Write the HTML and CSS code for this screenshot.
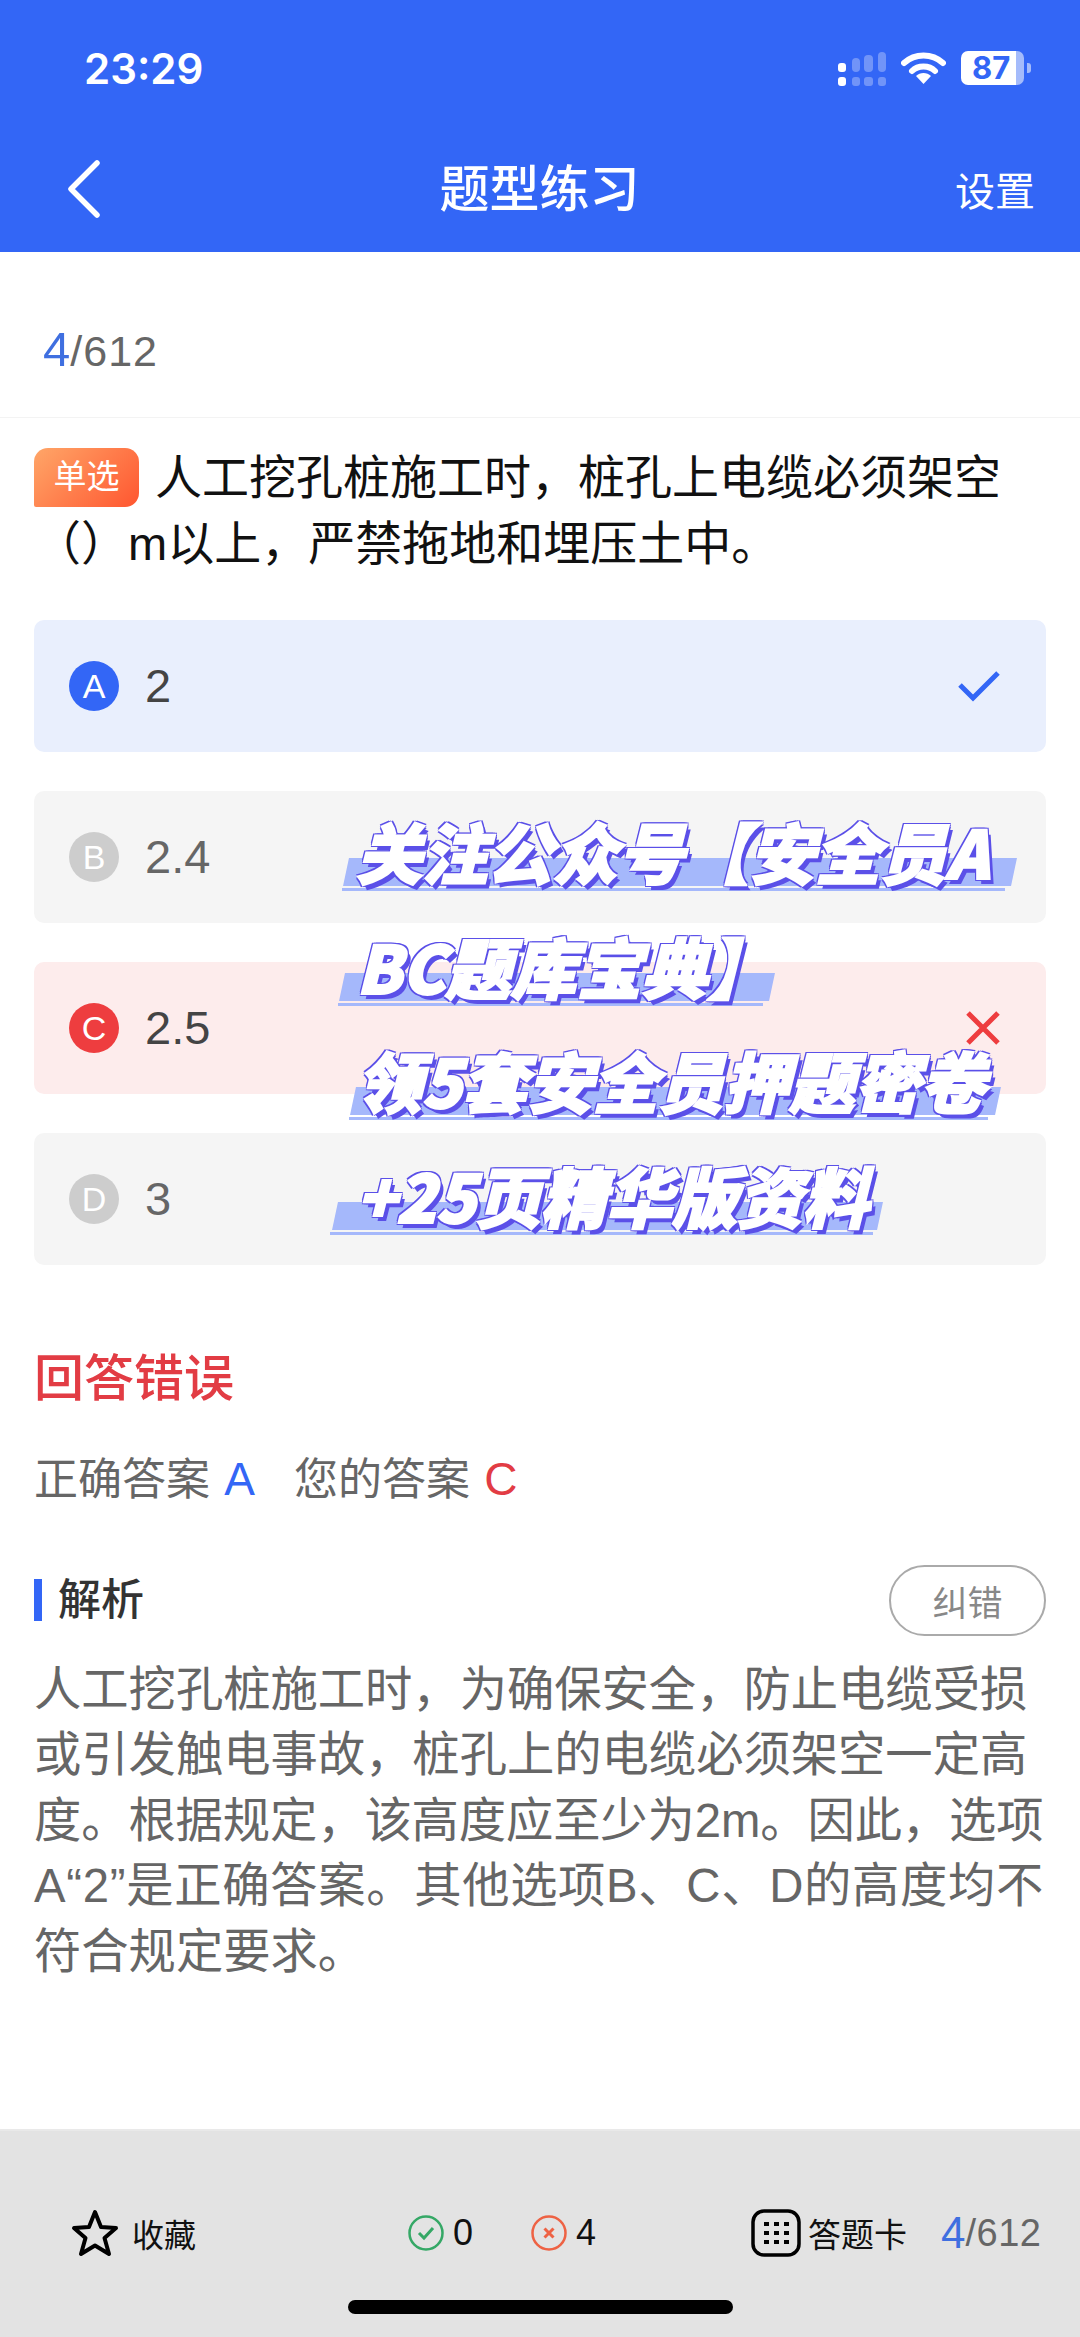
FILE: index.html
```html
<!DOCTYPE html>
<html lang="zh-CN">
<head>
    <meta charset="UTF-8">
    <meta name="viewport" content="width=device-width, initial-scale=1.0">
    <title>题型练习</title>
    <link rel="stylesheet" href="styles.css">
</head>
<body>
    <div class="page">
        <header class="top">
            <div class="status-bar">
                <span class="time">23:29</span>
                <div class="status-icons">
                    <svg class="signal" width="48" height="34" viewBox="0 0 48 34">
                        <g fill="#fff" opacity="0.3">
                            <rect x="14" y="6" width="8" height="14" rx="4"/>
                            <rect x="26" y="3" width="9" height="17" rx="4"/>
                            <rect x="40" y="0" width="8" height="20" rx="4"/>
                            <rect x="14" y="25" width="8" height="9" rx="3"/>
                            <rect x="26" y="25" width="9" height="9" rx="3"/>
                            <rect x="40" y="25" width="8" height="9" rx="3"/>
                        </g>
                        <rect x="0" y="11" width="8" height="9" rx="3" fill="#fff"/>
                        <rect x="0" y="25" width="8" height="9" rx="3" fill="#fff"/>
                    </svg>
                    <svg class="wifi" width="45" height="32" viewBox="0 0 45 32">
                        <path d="M3 11 C14 1 31 1 42 11" fill="none" stroke="#fff" stroke-width="6" stroke-linecap="round"/>
                        <path d="M11 19 C17 13 28 13 34 19" fill="none" stroke="#fff" stroke-width="6" stroke-linecap="round"/>
                        <path d="M15 24 C19 20 26 20 30 24 L22.500 32 Z" fill="#fff"/>
                    </svg>
                    <div class="battery">
                        <div class="battery-body"><span>87</span></div>
                        <div class="battery-nub"></div>
                    </div>
                </div>
            </div>
            <div class="nav-bar">
                <svg class="back" width="36" height="58" viewBox="0 0 36 58">
                    <path d="M31 3 L5 29 L31 55" fill="none" stroke="#fff" stroke-width="5.500" stroke-linecap="round" stroke-linejoin="round"/>
                </svg>
                <h1 class="nav-title">题型练习</h1>
                <span class="nav-action">设置</span>
            </div>
        </header>

        <div class="counter-row">
            <span class="count-now">4</span><span class="count-total">/612</span>
        </div>

        <main class="content">
            <p class="question"><span class="tag">单选</span>人工挖孔桩施工时，桩孔上电缆必须架空（）m以上，严禁拖地和埋压土中。</p>

            <div class="options">
                <div class="option option-right">
                    <span class="letter">A</span>
                    <span class="option-text">2</span>
                    <svg class="mark" width="44" height="32" viewBox="0 0 44 32">
                        <path d="M3 15 L16 28 L41 3" fill="none" stroke="#3366f6" stroke-width="5"/>
                    </svg>
                </div>
                <div class="option">
                    <span class="letter">B</span>
                    <span class="option-text">2.4</span>
                </div>
                <div class="option option-wrong">
                    <span class="letter">C</span>
                    <span class="option-text">2.5</span>
                    <svg class="mark" width="36" height="36" viewBox="0 0 36 36">
                        <path d="M3 3 L33 33 M33 3 L3 33" fill="none" stroke="#ee3d3f" stroke-width="5"/>
                    </svg>
                </div>
                <div class="option">
                    <span class="letter">D</span>
                    <span class="option-text">3</span>
                </div>
            </div>

            <h2 class="result">回答错误</h2>
            <p class="answers">正确答案 <span class="right-letter">A</span><span class="your-answer">您的答案 <span class="wrong-letter">C</span></span></p>

            <div class="analysis-head">
                <h3 class="analysis-title">解析</h3>
                <button class="report">纠错</button>
            </div>
            <p class="analysis">人工挖孔桩施工时，为确保安全，防止电缆受损或引发触电事故，桩孔上的电缆必须架空一定高<span class="fit-a">度。根据规定，该高度应至少为2m。因此，选项</span><span class="fit-b">A“2”是正确答案。其他选项B、C、D的高度均不</span>符合规定要求。</p>
        </main>

        <footer class="bottom">
            <div class="bottom-row">
                <div class="fav">
                    <svg width="48" height="48" viewBox="0 0 48 48">
                        <path d="M24 3 L30 18 L45 19 L33.500 29 L38 45 L24 36.500 L10 45 L14.500 29 L3 19 L18 18 Z" fill="none" stroke="#000" stroke-width="4" stroke-linejoin="round"/>
                    </svg>
                    <span>收藏</span>
                </div>
                <div class="stats">
                    <div class="stat">
                        <svg width="36" height="36" viewBox="0 0 36 36">
                            <circle cx="18" cy="18" r="16.500" fill="none" stroke="#35a866" stroke-width="2.500"/>
                            <path d="M11 18 L16 23 L25 13" fill="none" stroke="#35a866" stroke-width="3"/>
                        </svg>
                        <span>0</span>
                    </div>
                    <div class="stat">
                        <svg width="36" height="36" viewBox="0 0 36 36">
                            <circle cx="18" cy="18" r="16.500" fill="none" stroke="#ee6244" stroke-width="2.500"/>
                            <path d="M13.500 13.500 L22.500 22.500 M22.500 13.500 L13.500 22.500" fill="none" stroke="#ee6244" stroke-width="3"/>
                        </svg>
                        <span>4</span>
                    </div>
                </div>
                <div class="card-link">
                    <svg width="50" height="48" viewBox="0 0 50 48">
                        <rect x="2" y="2" width="46" height="44" rx="11" fill="none" stroke="#000" stroke-width="3.500"/>
                        <g fill="#000">
                            <rect x="13" y="13" width="5" height="4"/><rect x="23" y="13" width="5" height="4"/><rect x="33" y="13" width="5" height="4"/>
                            <rect x="13" y="22" width="5" height="4"/><rect x="23" y="22" width="5" height="4"/><rect x="33" y="22" width="5" height="4"/>
                            <rect x="13" y="31" width="5" height="4"/><rect x="23" y="31" width="5" height="4"/><rect x="33" y="31" width="5" height="4"/>
                        </g>
                    </svg>
                    <span class="card-text">答题卡</span>
                    <span class="bottom-now">4</span><span class="bottom-total">/612</span>
                </div>
            </div>
            <div class="home-indicator"></div>
        </footer>

        <div class="watermark">
            <span class="wm-line wm-first">关注公众号【安全员A</span>
            <span class="wm-line wm-second">BC题库宝典】</span>
            <span class="wm-line wm-third">领5套安全员押题密卷</span>
            <span class="wm-line wm-fourth">+25页精华版资料</span>
        </div>
    </div>
</body>
</html>
```

FILE: styles.css
```css
* {
    box-sizing: border-box;
}

body {
    margin: 0;
    background-color: #fff;
    font-family: "Liberation Sans", "Noto Sans CJK SC", sans-serif;
}

.page {
    position: relative;
    width: 1080px;
    height: 2337px;
    overflow: hidden;
    display: flex;
    flex-direction: column;
}

/* top blue bar */
.top {
    height: 252px;
    background-color: #3366f6;
    color: #fff;
}

.status-bar {
    height: 136px;
    padding: 46px 49px 0 84px;
    display: flex;
    justify-content: space-between;
    align-items: flex-start;
}

.time {
    font-family: Inter, sans-serif;
    font-size: 42px;
    font-weight: 600;
    line-height: 46px;
}

.status-icons {
    display: flex;
    align-items: flex-start;
    padding-top: 6px;
}

.signal {
    margin-right: 15px;
}

.wifi {
    margin-right: 15px;
}

.battery {
    display: flex;
    align-items: center;
    margin-top: -1px;
}

.battery-body {
    width: 63px;
    height: 34px;
    border-radius: 7px;
    background: linear-gradient(to right, #fff 87%, #a4bbfb 87%);
    padding-left: 11px;
}

.battery-body span {
    font-family: Inter, sans-serif;
    font-size: 31px;
    font-weight: 700;
    line-height: 34px;
    color: #3366f6;
    display: block;
}

.battery-nub {
    width: 4px;
    height: 10px;
    margin-left: 3px;
    border-radius: 0 3px 3px 0;
    background-color: #a4bbfb;
}

.nav-bar {
    height: 116px;
    padding: 0 45px 0 66px;
    display: flex;
    justify-content: space-between;
    align-items: center;
}

.back {
    margin-top: -11px;
}

.nav-title {
    margin: -8px 0 0 22px;
    font-size: 50px;
    font-weight: 500;
    line-height: 60px;
}

.nav-action {
    font-size: 40px;
    line-height: 48px;
    margin-top: -4px;
}

/* 4/612 row */
.counter-row {
    height: 166px;
    padding: 67px 0 0 43px;
    border-bottom: 1px solid #f3f3f3;
    line-height: 60px;
}

.count-now {
    font-size: 49px;
    color: #3f6fe0;
}

.count-total {
    font-size: 43px;
    letter-spacing: 1px;
    color: #666;
}

/* question and answers */
.content {
    flex: 1;
    padding: 0 34px;
}

.question {
    margin: 27px 0 0;
    font-size: 47px;
    line-height: 66px;
    color: #111;
}

.tag {
    display: inline-block;
    width: 105px;
    height: 59px;
    margin-right: 16px;
    border-radius: 14px 14px 14px 2px;
    background: linear-gradient(135deg, #ffa668, #ff5630);
    color: #fff;
    font-size: 33px;
    line-height: 57px;
    text-align: center;
    vertical-align: 6px;
}

.options {
    margin-top: 43px;
    display: flex;
    flex-direction: column;
    gap: 39.500px;
}

.option {
    height: 131.500px;
    padding: 0 45px 0 35px;
    border-radius: 10px;
    background-color: #f5f5f5;
    display: flex;
    align-items: center;
    color: #666;
}

.letter {
    width: 50px;
    height: 50px;
    border-radius: 50%;
    background-color: #cdcdcd;
    color: #fff;
    font-size: 34px;
    line-height: 50px;
    text-align: center;
}

.option-text {
    flex: 1;
    margin-left: 26px;
    font-size: 47px;
    line-height: 56px;
}

.option-right {
    background-color: #e9effd;
    color: #444;
}

.option-right .letter {
    background-color: #3366f6;
}

.option-wrong {
    background-color: #fdecec;
    color: #444;
}

.option-wrong .letter {
    background-color: #ee3d3f;
}

.result {
    margin: 82px 0 0;
    font-size: 50px;
    font-weight: 500;
    line-height: 64px;
    color: #e23c44;
}

.answers {
    margin: 38px 0 0;
    font-size: 44px;
    line-height: 60px;
    color: #666;
}

.right-letter {
    margin-left: 2px;
    font-size: 46px;
    color: #3366f6;
}

.wrong-letter {
    margin-left: 2px;
    font-size: 46px;
    color: #e23c44;
}

.your-answer {
    margin-left: 39px;
}

.analysis-head {
    margin-top: 55px;
    display: flex;
    justify-content: space-between;
    align-items: center;
    height: 71px;
}

.analysis-title {
    margin: 0;
    padding-left: 16px;
    border-left: 8px solid #3366f6;
    font-size: 43px;
    font-weight: 500;
    line-height: 42px;
    color: #333;
}

.report {
    width: 157px;
    height: 71px;
    padding: 0;
    border: 2px solid #aaa;
    border-radius: 36px;
    background: none;
    color: #888;
    font-family: inherit;
    font-size: 35px;
}

.analysis {
    margin: 21px 0 0;
    font-size: 47.300px;
    line-height: 65.500px;
    color: #666;
}

/* line 3 and 4 run to the full width in the screenshot */
.fit-a {
    letter-spacing: -0.100px;
}

.fit-b {
    letter-spacing: 0.700px;
}

/* bottom bar */
.bottom {
    height: 208px;
    padding-top: 72px;
    background-color: #e3e3e3;
    border-top: 2px solid #e9e9e9;
    color: #111;
}

.bottom-row {
    height: 60px;
    padding-left: 71px;
    display: flex;
    align-items: center;
}

.bottom-row svg {
    flex-shrink: 0;
}

.fav {
    width: 337px;
    display: flex;
    align-items: center;
    gap: 13px;
    font-size: 32px;
}

.stats {
    width: 343px;
    display: flex;
    align-items: center;
    gap: 58px;
    font-size: 36px;
}

.stat {
    display: flex;
    align-items: center;
    gap: 9px;
}

.card-link {
    display: flex;
    align-items: center;
}

.card-text {
    margin-left: 7px;
    font-size: 33px;
}

.bottom-now {
    margin-left: 34px;
    font-size: 44px;
    color: #3f6fe0;
}

.bottom-total {
    font-size: 38px;
    letter-spacing: 0.500px;
    color: #666;
}

.home-indicator {
    width: 385px;
    height: 14px;
    margin: 37px auto 0;
    border-radius: 7px;
    background-color: #000;
}

/* promo text over the page */
.watermark {
    position: absolute;
    z-index: 1;
    left: 356px;
    top: 793px;
    display: flex;
    flex-direction: column;
    align-items: flex-start;
    font-family: "Noto Sans CJK SC", sans-serif;
    font-size: 66px;
    font-style: italic;
    font-weight: 900;
    letter-spacing: -0.500px;
}

.wm-line {
    position: relative;
    height: 114.500px;
    line-height: 114.500px;
    color: #fff;
    white-space: nowrap;
    -webkit-text-stroke: 2px #fff;
    text-shadow:
        2px 0 0 #5b50e8, -2px 0 0 #5b50e8, 0 2px 0 #5b50e8, 0 -2px 0 #5b50e8,
        2px 2px 0 #5b50e8, -2px -2px 0 #5b50e8, 2px -2px 0 #5b50e8, -2px 2px 0 #5b50e8,
        4px 5px 0 #5b50e8;
}

.wm-line::before {
    content: "";
    position: absolute;
    z-index: -1;
    top: 65px;
    height: 28px;
    background-color: #a5b8fb;
    transform: skewX(-12deg);
}

.wm-line::after {
    content: "";
    position: absolute;
    z-index: -1;
    top: 95px;
    height: 3px;
    background-color: #a5b8fb;
}

.wm-first::before {
    left: -10px;
    right: -25px;
}

.wm-first::after {
    left: -14px;
    right: -16px;
}

.wm-second::before {
    left: -14px;
    right: 0;
}

.wm-second::after {
    left: -18px;
    right: 9px;
}

.wm-third::before {
    left: -3px;
    right: -13px;
}

.wm-third::after {
    left: -7px;
    right: -3px;
}

.wm-fourth::before {
    left: -21px;
    right: -12px;
}

.wm-fourth::after {
    left: -26px;
    right: -5px;
}
```
